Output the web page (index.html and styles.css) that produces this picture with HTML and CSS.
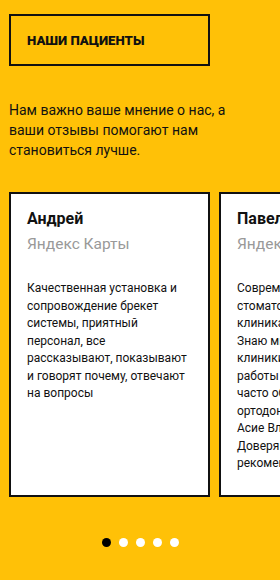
FILE: index.html
```html
<!DOCTYPE html>
<html lang="ru">
<head>
  <meta charset="UTF-8">
  <meta name="viewport" content="width=device-width, initial-scale=1.0">
  <title>Наши пациенты</title>
  <link rel="stylesheet" href="styles.css">
</head>
<body>
  <section class="reviews">
    <div class="reviews-title">
      <h2>НАШИ ПАЦИЕНТЫ</h2>
    </div>
    <p class="reviews-lead">Нам важно ваше мнение о нас, а ваши отзывы помогают нам становиться лучше.</p>

    <div class="slider">
      <div class="card">
        <div class="card-name">Андрей</div>
        <div class="card-source">Яндекс Карты</div>
        <p class="card-text">Качественная установка и сопровождение брекет системы, приятный персонал, все рассказывают, показывают и говорят почему, отвечают на вопросы</p>
      </div>
      <div class="card">
        <div class="card-name">Павел</div>
        <div class="card-source">Яндекс Карты</div>
        <p class="card-text">Современная<br>стоматологическая<br>клиника, всё чисто.<br>Знаю многие<br>клиники города, но<br>работы лучше не видел,<br>часто обращаюсь к<br>ортодонту клиники<br>Асие Владимировне.<br>Доверяю и всем<br>рекомендую!</p>
      </div>
    </div>

    <div class="dots">
      <span class="dot active"></span>
      <span class="dot"></span>
      <span class="dot"></span>
      <span class="dot"></span>
      <span class="dot"></span>
    </div>
  </section>
</body>
</html>
```

FILE: styles.css
```css
body {
  margin: 0;
  font-family: Roboto, "Liberation Sans", sans-serif;
  background-color: #ffc107;
  color: #111;
}

.reviews {
  padding: 14px 0 0 9px;
  height: 580px;
  box-sizing: border-box;
  overflow: hidden;
}

.reviews-title {
  width: 201px;
  height: 52px;
  box-sizing: border-box;
  border: 2px solid #111;
  padding-left: 16px;
  display: flex;
  align-items: center;
}

.reviews-title h2 {
  margin: 0;
  font-size: 13.2px;
  font-weight: 900;
}

.reviews-lead {
  margin: 34px 0 0;
  padding-right: 40px;
  font-size: 14px;
  line-height: 20px;
}

.slider {
  display: flex;
  gap: 9px;
  margin-top: 32px;
}

.card {
  flex: 0 0 201px;
  height: 305px;
  box-sizing: border-box;
  background-color: #fff;
  border: 2px solid #111;
  padding: 15px 16px 0;
}

.card-name {
  font-size: 16px;
  font-weight: 700;
  line-height: 20px;
}

.card-source {
  margin-top: 5px;
  font-size: 15.5px;
  line-height: 20px;
  color: #999;
}

.card-text {
  margin: 26px 0 0;
  font-size: 12px;
  line-height: 17.5px;
}

.dots {
  display: flex;
  justify-content: center;
  gap: 8px;
  margin-top: 41px;
  margin-left: -9px;
}

.dot {
  width: 9px;
  height: 9px;
  border-radius: 50%;
  background-color: #fff;
}

.dot.active {
  background-color: #000;
}
```
